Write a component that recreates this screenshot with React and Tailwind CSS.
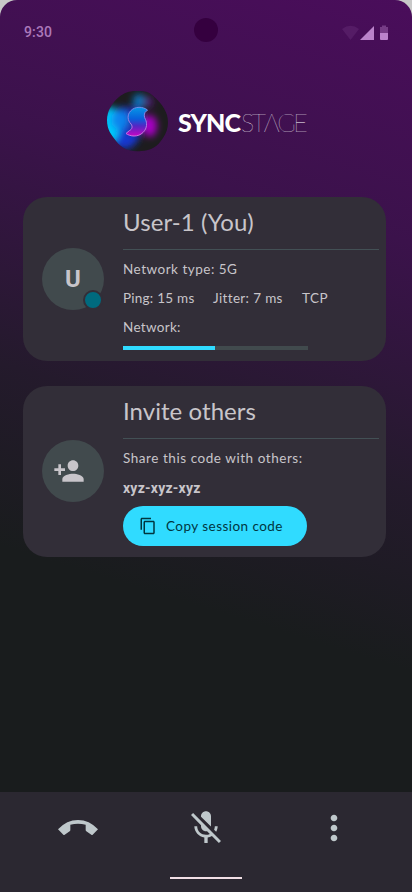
import { MdContentCopy, MdMicOff, MdMoreVert, MdPersonAdd } from 'react-icons/md';

function StatusBar() {
  return (
    <header className="relative flex h-[64px] items-center justify-between pr-[24px] pl-[24px] text-[#ab78ba]">
      <span className="font-[Roboto,sans-serif] text-[14px] leading-[20px] font-medium tracking-[0.15px]">9:30</span>
      <span className="absolute top-[18px] left-[194px] h-6 w-6 rounded-full bg-[#35003f]" />
      <svg className="mt-[2px] h-[16px] w-[46px]" viewBox="0 0 46 16" fill="#bb83cb">
        <path d="M0 4Q8.500 -2.500 17 4L8.500 15Z" opacity=".12" />
        <path d="M32 1V15H18Z" />
        <path d="M38 2h2V.5h4V2h2v6h-8Z" opacity=".4" />
        <path d="M38 8h8v6q0 1-1 1h-6q-1 0-1-1Z" />
      </svg>
    </header>
  );
}

function LogoMark() {
  return (
    <svg className="h-[61px] w-[61px]" viewBox="0 0 61 61">
      <defs>
        <clipPath id="blob">
          <path d="M29 0C35 0 41 0 45 4C51 9 57 15 60 24C62 32 61 40 56 47C51 55 44 60 34 60C23 61 15 58 9 50C4 43 0 39 0 29C0 20 5 12 12 6C17 2 22 0 29 0Z" />
        </clipPath>
        <filter id="soft" x="-60%" y="-60%" width="220%" height="220%">
          <feGaussianBlur stdDeviation="3.800" />
        </filter>
        <linearGradient id="mark" x1="0" y1="0" x2="0" y2="1">
          <stop offset="0" stopColor="#0796e6" />
          <stop offset=".4" stopColor="#0860dc" />
          <stop offset=".65" stopColor="#5426c4" />
          <stop offset="1" stopColor="#c606c4" />
        </linearGradient>
        <linearGradient id="rim" x1="0" y1="0" x2="0" y2="1">
          <stop offset="0" stopColor="#6c8ee8" />
          <stop offset="1" stopColor="#d76fe2" />
        </linearGradient>
      </defs>
      <g clipPath="url(#blob)">
        <rect width="61" height="61" fill="#1d1c1e" />
        <g filter="url(#soft)">
          <ellipse cx="17" cy="37" rx="17" ry="21" fill="#1539cf" />
          <ellipse cx="28" cy="30" rx="10" ry="15" fill="#2420a8" />
          <ellipse cx="3" cy="34" rx="10" ry="18" fill="#00c8fc" />
          <ellipse cx="13" cy="29" rx="9" ry="10" fill="#0a83ed" />
          <ellipse cx="32" cy="10" rx="6" ry="7" fill="#0a74bd" />
          <ellipse cx="42" cy="11" rx="4" ry="6" fill="#511675" />
          <ellipse cx="43" cy="35" rx="7" ry="11" fill="#a806c4" />
        </g>
      </g>
      <path
        d="M40.500 19C36 15.500 28 15 23.500 20C20 24 20.500 29.500 24 33C26 35.500 25 38.500 22.500 39.500L19 42.500C23 45.500 31 46.500 36 41.500C40.500 37 40 31.500 38.500 28.500C37 26 37 23.500 38 21.500Z"
        fill="url(#mark)"
        stroke="url(#rim)"
        strokeWidth="1"
      />
    </svg>
  );
}

function Logo() {
  return (
    <div className="mt-[27px] flex h-[61px] items-center pl-[107px] text-white">
      <LogoMark />
      <div className="ml-[10px] flex items-baseline font-[Lato,sans-serif] text-[25px] leading-[30px] whitespace-nowrap">
        <span className="w-[63px] font-black tracking-[-0.9px]">SYNC</span>
        <span className="font-thin tracking-[-2.400px]">STΛGE</span>
      </div>
    </div>
  );
}

function Card({ avatar, title, className, children }) {
  return (
    <section className={`ml-[23px] flex w-[363px] items-center rounded-[24px] bg-[#322e38] pl-[19px] ${className}`}>
      <div className="relative mb-[1px] flex h-[62px] w-[62px] shrink-0 items-center justify-center rounded-full bg-[#414a4d]">
        {avatar}
      </div>
      <div className="ml-[19px] h-full w-[256px]">
        <h2 className="h-[53px] border-b border-[#435055] pt-[9px] text-[24px] leading-[32px] whitespace-nowrap">{title}</h2>
        {children}
      </div>
    </section>
  );
}

function UserCard() {
  return (
    <Card
      className="mt-[45px] h-[164px]"
      title={<span className="tracking-[0.1px]">User-1 (You)</span>}
      avatar={
        <>
          <span className="font-[Roboto,sans-serif] text-[24px] font-bold">U</span>
          <span className="absolute top-[42px] left-[41px] h-5 w-5 rounded-full border-2 border-[#322e38] bg-[#006a7e]" />
        </>
      }
    >
      <div className="flex flex-col gap-[9px] pt-[9px] text-[13.500px] leading-[20px] whitespace-nowrap">
        <p className="tracking-[0.5px]">Network type: 5G</p>
        <p className="flex tracking-[0.25px]">
          <span className="w-[90px]">Ping: 15 ms</span>
          <span className="w-[89px] tracking-[0.35px]">Jitter: 7 ms</span>
          <span className="tracking-[0.5px]">TCP</span>
        </p>
        <p className="tracking-[0.3px]">Network:</p>
      </div>
      <div className="mt-[9px] h-1 w-[184.500px] bg-[#414a4d]">
        <div className="h-full w-1/2 bg-[#30dbff]" />
      </div>
    </Card>
  );
}

function InviteCard() {
  return (
    <Card
      className="mt-[25px] h-[171px]"
      title={<span className="tracking-[0.05px]">Invite others</span>}
      avatar={<MdPersonAdd className="mr-2 h-8 w-8" />}
    >
      <p className="mt-[9px] text-[13.500px] leading-[20px] tracking-[0.55px] whitespace-nowrap">
        Share this code with others:
      </p>
      <p className="mt-[10px] font-[Roboto,sans-serif] text-[14px] leading-[20px] font-bold tracking-[0.25px]">xyz-xyz-xyz</p>
      <button className="mt-[8px] flex h-10 w-[184px] items-center rounded-full bg-[#30dbff] pl-4 text-[13.500px] tracking-[0.45px] whitespace-nowrap text-[#00363f]">
        <MdContentCopy className="mr-[9px] h-[18px] w-[18px]" />
        Copy session code
      </button>
    </Card>
  );
}

function HangUpIcon() {
  return (
    <svg className="mb-[2px] h-[15px] w-10" viewBox="0 0 120 45" fill="currentColor">
      <path d="M0 28Q26 0 60 0T120 28L104 44Q102 46 100 44L85 34Q83 33 83 30V14Q60 9 37 14V30Q37 33 35 34L20 44Q18 46 16 44Z" />
    </svg>
  );
}

function BottomBar() {
  return (
    <footer className="mt-auto flex h-[100px] flex-col items-center bg-[#2b2831] text-[#bfc8cb]">
      <div className="flex h-[72px] w-full items-center justify-between pr-[58px] pl-[58px]">
        <HangUpIcon />
        <MdMicOff className="h-10 w-10" />
        <MdMoreVert className="h-10 w-10" />
      </div>
      <div className="mt-[13px] h-[2px] w-[72px] bg-[#f1dfe5]" />
    </footer>
  );
}

export default function App() {
  return (
    <div className="bg-[#c8c8c8]">
      <main className="flex h-[892px] w-[412px] flex-col overflow-hidden rounded-t-[17px] bg-[linear-gradient(197deg,#4a0d5b_0%,#3b124b_24%,#241a2c_48%,#191c1d_66%)] font-[Lato,sans-serif] text-[#c8c5ca]">
        <StatusBar />
        <Logo />
        <UserCard />
        <InviteCard />
        <BottomBar />
      </main>
    </div>
  );
}
